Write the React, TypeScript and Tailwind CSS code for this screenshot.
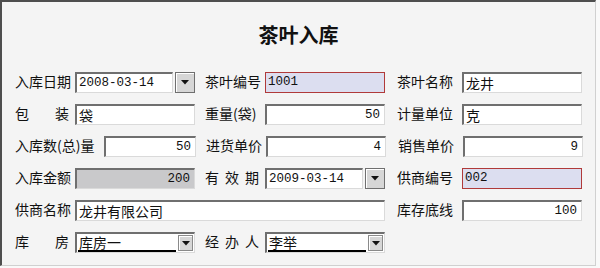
import type { ReactNode } from "react";

const cjk = "font-['Noto_Sans_CJK_SC','Noto_Sans',sans-serif]";
const mono = "font-['Liberation_Mono','Noto_Sans_CJK_SC',monospace] text-[12.5px]";
const sunken =
  "border-t-2 border-l-2 border-r border-b border-t-[#6f6f6f] border-l-[#6f6f6f] border-r-[#dadada] border-b-[#dadada]";

const Label = ({ children, w = "w-[60px]", spread = false }: { children: ReactNode; w?: string; spread?: boolean }) => (
  <div className={`${w} shrink-0 flex ${spread ? "justify-between pr-[6px]" : ""} text-[14px] leading-[18px] -mt-[3px] ${cjk}`}>
    {children}
  </div>
);

const Caret = () => (
  <svg width="8" height="5" viewBox="0 0 8 5">
    <path d="M0 0h8L4 4.5z" fill="#111" />
  </svg>
);

const Field = ({
  value,
  w = "w-[120px]",
  right = false,
  num = false,
  kind = "plain",
}: {
  value: string;
  w?: string;
  right?: boolean;
  num?: boolean;
  kind?: "plain" | "key" | "gray";
}) => {
  const look =
    kind === "key"
      ? "border border-[#b03a3a] bg-[#dcdef0]"
      : kind === "gray"
        ? `${sunken} bg-[#c9c9cb]`
        : `${sunken} bg-white`;
  return (
    <div
      className={`${w} h-[21px] shrink-0 flex items-center px-[2px] ${look} ${right ? "justify-end pr-[4px]" : ""} ${
        num ? mono : `${cjk} text-[14px]`
      } leading-none text-[#111]`}
    >
      {value}
    </div>
  );
};

const DateField = ({ value }: { value: string }) => (
  <div className="w-[120px] shrink-0 flex gap-[2px]">
    <Field value={value} w="w-[98px]" num />
    <div className="w-[20px] h-[21px] flex items-center justify-center bg-[#d6d6d6] border border-[#6f6f6f] shadow-[inset_1px_1px_0_#fff]">
      <Caret />
    </div>
  </div>
);

const Combo = ({ value }: { value: string }) => (
  <div className={`w-[120px] h-[21px] shrink-0 flex items-center ${sunken} bg-white pl-[1px] pr-[1px]`}>
    <div className={`flex-1 h-full border-b-2 border-black ${cjk} text-[14px] leading-[17px] text-[#111] pl-[1px]`}>
      {value}
    </div>
    <div className="ml-[2px] w-[15px] h-[16px] flex items-center justify-center bg-[#d6d6d6] border border-[#8a8a8a] shadow-[inset_1px_1px_0_#fff]">
      <Caret />
    </div>
  </div>
);

const Row = ({ children }: { children: ReactNode }) => <div className="flex items-center h-[21px]">{children}</div>;

export default function App() {
  return (
    <div className="w-[600px] h-[268px] bg-[#f9f9f9] overflow-hidden">
      <div className="w-[596px] h-[266px] bg-[#f4f4f4] border-t-2 border-l-2 border-[#4e4e4e] border-r border-b border-r-[#d0d0d0] border-b-[#d0d0d0]">
        <div className={`pt-[20px] h-[70px] text-center text-[20px] font-bold leading-[26px] text-[#111] ${cjk}`}>茶叶入库</div>
        <div className="flex flex-col gap-[11px] pl-[13px] text-[#111]">
          <Row>
            <Label>入库日期</Label>
            <DateField value="2008-03-14" />
            <div className="w-[10px]" />
            <Label>茶叶编号</Label>
            <Field value="1001" num kind="key" />
            <div className="w-[12px]" />
            <Label w="w-[65px]">茶叶名称</Label>
            <Field value="龙井" />
          </Row>
          <Row>
            <Label spread>
              <span>包</span>
              <span>装</span>
            </Label>
            <Field value="袋" />
            <div className="w-[10px]" />
            <Label>重量(袋)</Label>
            <Field value="50" num right />
            <div className="w-[12px]" />
            <Label w="w-[65px]">计量单位</Label>
            <Field value="克" />
          </Row>
          <Row>
            <Label w="w-[89px]">入库数(总)量</Label>
            <Field value="50" num right w="w-[92px]" />
            <div className="w-[10px]" />
            <Label>进货单价</Label>
            <Field value="4" num right />
            <div className="w-[12px]" />
            <Label w="w-[65px]">销售单价</Label>
            <Field value="9" num right />
          </Row>
          <Row>
            <Label>入库金额</Label>
            <Field value="200" num right kind="gray" />
            <div className="w-[10px]" />
            <Label spread>
              <span>有</span>
              <span>效</span>
              <span>期</span>
            </Label>
            <DateField value="2009-03-14" />
            <div className="w-[12px]" />
            <Label w="w-[65px]">供商编号</Label>
            <Field value="002" num kind="key" />
          </Row>
          <Row>
            <Label>供商名称</Label>
            <Field value="龙井有限公司" w="w-[310px]" />
            <div className="w-[12px]" />
            <Label w="w-[65px]">库存底线</Label>
            <Field value="100" num right />
          </Row>
          <Row>
            <Label spread>
              <span>库</span>
              <span>房</span>
            </Label>
            <Combo value="库房一" />
            <div className="w-[10px]" />
            <Label spread>
              <span>经</span>
              <span>办</span>
              <span>人</span>
            </Label>
            <Combo value="李举" />
          </Row>
        </div>
      </div>
    </div>
  );
}
